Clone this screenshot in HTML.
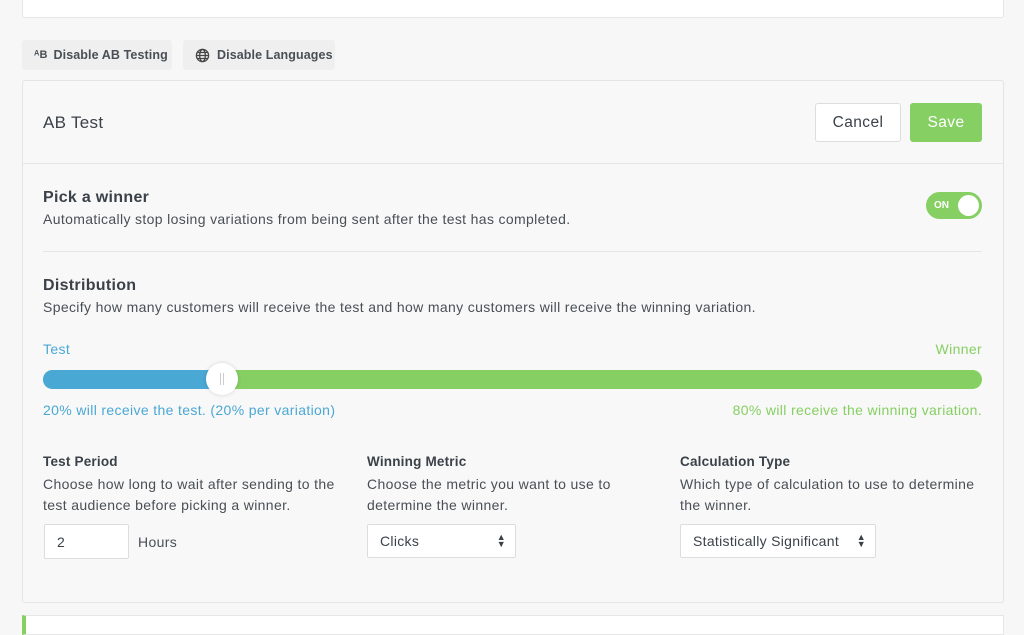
<!DOCTYPE html>
<html><head><style>
*{box-sizing:border-box;margin:0;padding:0}
body{width:1024px;height:627px;overflow:hidden;background:#f7f7f7;font-family:"Liberation Sans",sans-serif;color:#3a4148;position:relative}
.a{position:absolute}
.card{background:#fff;border:1px solid #e6e6e6;border-radius:3px}
.tb{background:#efefef;border-radius:3px;height:30px;font-size:12.5px;font-weight:bold;color:#4a4f55;display:flex;align-items:center;padding-left:12px;letter-spacing:.1px}
.btn{border-radius:3px;font-size:15.5px;display:flex;align-items:center;justify-content:center;letter-spacing:.4px}
.h{font-size:16px;font-weight:bold;color:#3a4148;letter-spacing:.3px}
.p{font-size:14px;color:#4a4f55;letter-spacing:.35px}
.lbl{font-size:13.5px;font-weight:bold;color:#3a4148;letter-spacing:.2px}
.sel{background:#fff;border:1px solid #ddd;border-radius:2px;height:34px;font-size:14px;display:flex;align-items:center;padding-left:12px;letter-spacing:.3px}
</style></head><body>
<div class="a card" style="left:22px;top:-4px;width:982px;height:22px;border-top:none"></div>
<div class="a tb" style="left:22px;top:40px;width:150px"><span style="font-size:11px;margin-right:6px">ᴬB</span>Disable AB Testing</div>
<div class="a tb" style="left:183px;top:40px;width:152px"><svg width="15" height="15" viewBox="0 0 16 16" style="margin-right:7px" fill="none" stroke="#444" stroke-width="1.4"><circle cx="8" cy="8" r="6.5"/><ellipse cx="8" cy="8" rx="3" ry="6.5"/><path d="M1.5 8h13M2.5 4.8h11M2.5 11.2h11"/></svg>Disable Languages</div>
<div class="a" style="left:22px;top:80px;width:982px;height:523px;background:#f8f8f8;border:1px solid #e4e4e4;border-radius:3px"></div>
<div class="a" style="left:43px;top:113px;font-size:17px;color:#3a4148;letter-spacing:.3px">AB Test</div>
<div class="a btn" style="left:815px;top:103px;width:86px;height:39px;background:#fff;border:1px solid #ddd;color:#3a4148">Cancel</div>
<div class="a btn" style="left:910px;top:103px;width:72px;height:39px;background:#86cf63;color:#fff">Save</div>
<div class="a" style="left:23px;top:163px;width:980px;height:1px;background:#e6e6e6"></div>
<div class="a h" style="left:43px;top:189px">Pick a winner</div>
<div class="a p" style="left:43px;top:211px">Automatically stop losing variations from being sent after the test has completed.</div>
<div class="a" style="left:926px;top:192px;width:56px;height:27px;border-radius:14px;background:#86cf63"><span style="position:absolute;left:8px;top:8px;font-size:10px;font-weight:bold;color:#fff">ON</span><div style="position:absolute;right:3px;top:3px;width:21px;height:21px;border-radius:50%;background:#fff"></div></div>
<div class="a" style="left:43px;top:251px;width:939px;height:1px;background:#e6e6e6"></div>
<div class="a h" style="left:43px;top:277px">Distribution</div>
<div class="a p" style="left:43px;top:299px">Specify how many customers will receive the test and how many customers will receive the winning variation.</div>
<div class="a p" style="left:43px;top:341px;color:#4aa8d4">Test</div>
<div class="a p" style="right:42px;top:341px;color:#86cf63">Winner</div>
<div class="a" style="left:43px;top:370px;width:939px;height:19px;border-radius:10px;background:#86cf63"></div>
<div class="a" style="left:43px;top:370px;width:180px;height:19px;border-radius:10px 0 0 10px;background:#4aa8d4"></div>
<div class="a" style="left:206px;top:363px;width:32px;height:32px;border-radius:50%;background:#fff;box-shadow:0 0 4px rgba(0,0,0,.15)"><div style="position:absolute;left:14px;top:10px;width:4px;height:12px;border-left:1px solid #ccc;border-right:1px solid #ccc"></div></div>
<div class="a p" style="left:43px;top:402px;color:#4aa8d4">20% will receive the test. (20% per variation)</div>
<div class="a p" style="right:42px;top:402px;color:#86cf63">80% will receive the winning variation.</div>
<div class="a lbl" style="left:43px;top:454px">Test Period</div>
<div class="a p" style="left:43px;top:474px;line-height:21px;width:305px">Choose how long to wait after sending to the test audience before picking a winner.</div>
<div class="a sel" style="left:44px;top:524px;width:85px;height:35px">2</div>
<div class="a p" style="left:138px;top:534px">Hours</div>
<div class="a lbl" style="left:367px;top:454px">Winning Metric</div>
<div class="a p" style="left:367px;top:474px;line-height:21px;width:260px">Choose the metric you want to use to determine the winner.</div>
<div class="a sel" style="left:367px;top:524px;width:149px">Clicks<span style="position:absolute;right:9px;font-size:9px;line-height:7px">▲<br>▼</span></div>
<div class="a lbl" style="left:680px;top:454px">Calculation Type</div>
<div class="a p" style="left:680px;top:474px;line-height:21px;width:305px">Which type of calculation to use to determine the winner.</div>
<div class="a sel" style="left:680px;top:524px;width:196px">Statistically Significant<span style="position:absolute;right:9px;font-size:9px;line-height:7px">▲<br>▼</span></div>
<div class="a" style="left:22px;top:615px;width:982px;height:20px;background:#fff;border:1px solid #e6e6e6;border-left:4px solid #86cf63"></div>
</body></html>
